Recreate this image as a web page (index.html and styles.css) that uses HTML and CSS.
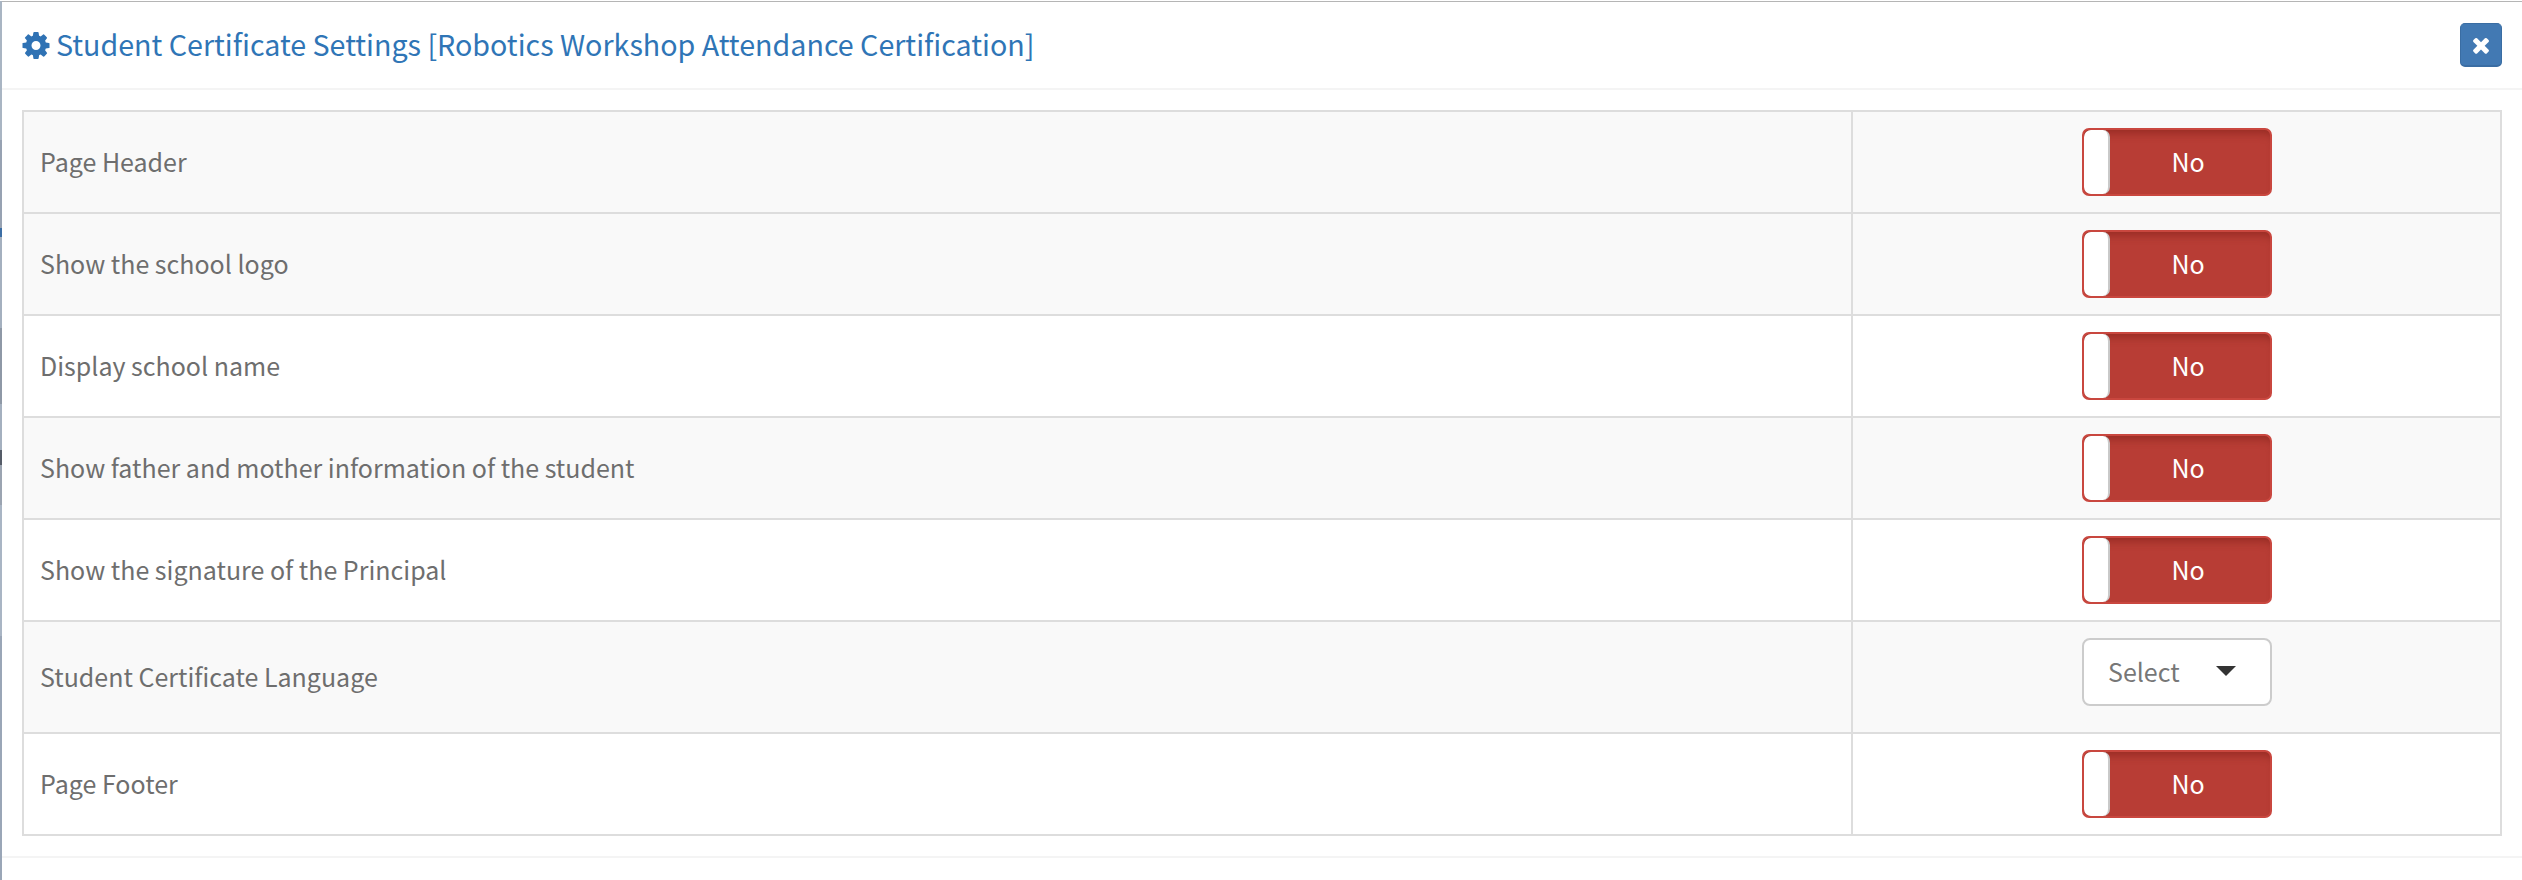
FILE: index.html
```html
<!DOCTYPE html>
<html lang="en">
<head>
<meta charset="utf-8">
<title>Student Certificate Settings</title>
<link rel="stylesheet" href="styles.css">
</head>
<body>
<div class="modal">
  <header class="modal-header">
    <h4 class="modal-title">
      <svg class="icon-cog" viewBox="128 128 1536 1536" aria-hidden="true"><path d="M1152 896q0-106-75-181t-181-75-181 75-75 181 75 181 181 75 181-75 75-181zm512-109v222q0 12-8 23t-20 13l-185 28q-19 54-39 91 35 50 107 138 10 12 10 25t-9 23q-27 37-99 108t-94 71q-12 0-26-9l-138-108q-44 23-91 38-16 136-29 186-7 28-36 28h-222q-14 0-24.500-8.500t-11.500-21.500l-28-184q-49-16-90-37l-141 107q-10 9-25 9-14 0-25-11-126-114-165-168-7-10-7-23 0-12 8-23 15-21 51-66.500t54-70.500q-27-50-41-99l-183-27q-13-2-21-12.500t-8-23.500v-222q0-12 8-23t19-13l186-28q14-46 39-92-40-57-107-138-10-12-10-24 0-10 9-23 26-36 98.500-107.500t94.500-71.500q13 0 26 10l138 107q44-23 91-38 16-136 29-186 7-28 36-28h222q14 0 24.500 8.500t11.500 21.500l28 184q49 16 90 37l142-107q9-9 24-9 13 0 25 10 129 119 165 170 7 8 7 22 0 12-8 23-15 21-51 66.500t-54 70.500q26 50 41 98l183 28q13 2 21 12.500t8 23.500z"/></svg>
      <span class="title-text">Student Certificate Settings [Robotics Workshop Attendance Certification]</span>
    </h4>
    <button class="close-btn" type="button" aria-label="Close">
      <svg class="icon-times" viewBox="0 0 1792 1792" aria-hidden="true"><path d="M1490 1322q0 40-28 68l-136 136q-28 28-68 28t-68-28l-294-294-294 294q-28 28-68 28t-68-28l-136-136q-28-28-28-68t28-68l294-294-294-294q-28-28-28-68t28-68l136-136q28-28 68-28t68 28l294 294 294-294q28-28 68-28t68 28l136 136q28 28 28 68t-28 68l-294 294 294 294q28 28 28 68z"/></svg>
    </button>
  </header>
  <div class="modal-body">
    <table class="settings">
      <colgroup><col><col class="col-ctl"></colgroup>
      <tbody>
        <tr class="shade"><td class="label">Page Header</td><td class="ctl"><div class="toggle"><span class="knob"></span><span class="toggle-text">No</span></div></td></tr>
        <tr class="shade"><td class="label">Show the school logo</td><td class="ctl"><div class="toggle"><span class="knob"></span><span class="toggle-text">No</span></div></td></tr>
        <tr><td class="label">Display school name</td><td class="ctl"><div class="toggle"><span class="knob"></span><span class="toggle-text">No</span></div></td></tr>
        <tr class="shade"><td class="label">Show father and mother information of the student</td><td class="ctl"><div class="toggle"><span class="knob"></span><span class="toggle-text">No</span></div></td></tr>
        <tr><td class="label">Show the signature of the Principal</td><td class="ctl"><div class="toggle"><span class="knob"></span><span class="toggle-text">No</span></div></td></tr>
        <tr class="shade tall"><td class="label">Student Certificate Language</td><td class="ctl ctl-top"><div class="select"><span>Select</span><i class="caret"></i></div></td></tr>
        <tr><td class="label">Page Footer</td><td class="ctl"><div class="toggle"><span class="knob"></span><span class="toggle-text">No</span></div></td></tr>
      </tbody>
    </table>
  </div>
</div>
</body>
</html>
```
FILE: styles.css
```css
* { box-sizing: border-box; }
html, body { margin: 0; height: 100%; }
body {
  padding-top: 1px;
  background: linear-gradient(
    #fff 0 1px,
    #a9b5c3 1px 140px,
    #97a2b2 140px 228px,
    #3c6ea5 228px 237px,
    #a4b0bf 237px 328px,
    #8e98a6 328px 404px,
    #a4b0bf 404px 450px,
    #555c68 450px 465px,
    #9ba4b1 465px 505px,
    #a9b5c4 505px 636px,
    #9aa6b7 636px
  );
  font-family: "Noto Sans CJK JP", "Source Sans Pro", "Noto Sans", sans-serif;
  color: #6e6e6e;
  overflow: hidden;
}
.modal {
  margin-left: 2px;
  height: 879px;
  background: #fff;
  border-top: 1px solid #b5b5b5;
}
.modal-header {
  height: 88px;
  border-bottom: 2px solid #f4f4f4;
  display: flex;
  align-items: center;
  justify-content: space-between;
  padding: 0 20px;
}
.modal-title {
  margin: 0;
  display: flex;
  align-items: center;
  gap: 6px;
  font-size: 28.65px;
  font-weight: 400;
  color: #2f75b6;
}
.title-text { position: relative; top: -2px; }
.icon-cog { width: 28px; height: 27px; fill: #2f72b4; }
.close-btn {
  width: 42px;
  height: 44px;
  padding: 0;
  display: flex;
  align-items: center;
  justify-content: center;
  background: #4279b3;
  border: 1px solid #3a6da3;
  border-bottom-width: 2px;
  border-radius: 5px;
}
.icon-times { width: 24px; height: 24px; fill: #fff; }
.modal-body {
  padding: 20px;
  border-bottom: 2px solid #f4f4f4;
}
.settings {
  width: 100%;
  border-collapse: collapse;
  table-layout: fixed;
}
.col-ctl { width: 649px; }
.settings td {
  height: 102px;
  padding: 0;
  border: 2px solid #ddd;
  vertical-align: middle;
}
.shade td { background: #f9f9f9; }
.settings .tall td { height: 112px; }
.settings .label {
  padding: 0 0 2px 16px;
  font-size: 25px;
  color: #6e6e6e;
}
.settings .ctl { padding-left: 229px; }
.settings .ctl-top { vertical-align: top; padding-top: 16px; }
.toggle {
  width: 190px;
  height: 68px;
  display: flex;
  background: #b83d35;
  border: 2px solid #c9473f;
  border-radius: 7px;
  box-shadow: inset 0 9px 8px -6px rgba(120, 30, 20, .55);
  overflow: hidden;
}
.knob {
  width: 26px;
  background: #fff;
  border-radius: 7px;
  border-right: 2px solid #c9c9c9;
}
.toggle-text {
  flex: 1;
  padding-right: 4px;
  text-align: center;
  line-height: 62px;
  font-size: 25px;
  color: #fff;
}
.select {
  width: 190px;
  height: 68px;
  display: flex;
  align-items: center;
  justify-content: space-between;
  padding: 0 34px 3px 24px;
  background: #fff;
  border: 2px solid #ccc;
  border-radius: 8px;
  font-size: 25px;
  color: #777;
}
.caret {
  width: 0;
  height: 0;
  border-left: 10px solid transparent;
  border-right: 10px solid transparent;
  border-top: 10px solid #333;
}
```
